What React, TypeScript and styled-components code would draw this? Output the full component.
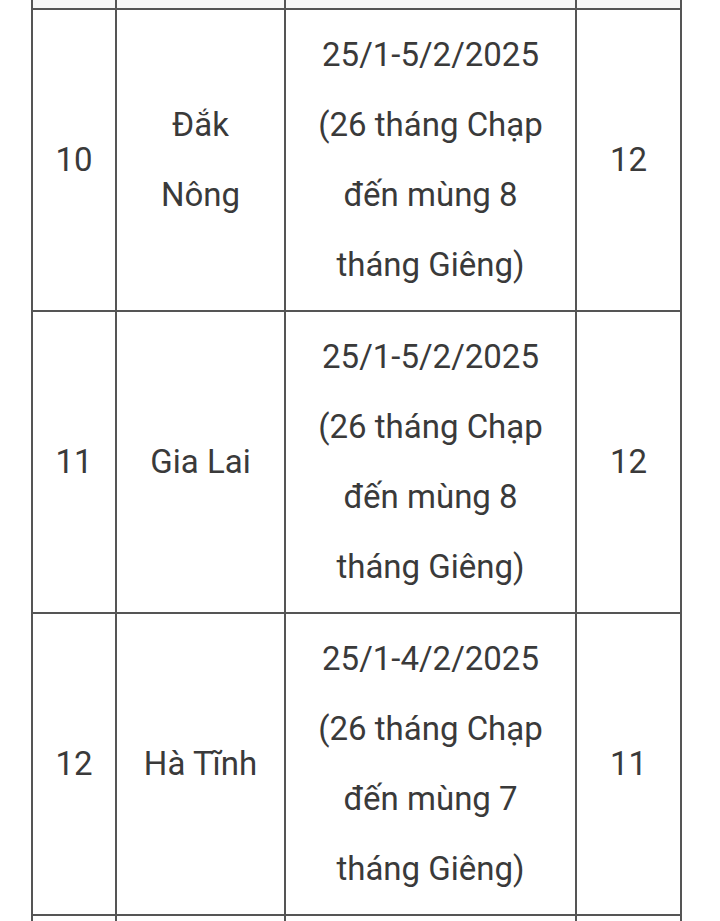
import styled, { createGlobalStyle } from "styled-components";

const GlobalStyle = createGlobalStyle`
    html, body {
        margin: 0;
        padding: 0;
        background: #ffffff;
    }
`;

const Page = styled.div`
    height: 921px;
    overflow: hidden;
    background: #ffffff;
`;

const Table = styled.table`
    margin-left: 31px;
    width: 649px;
    border-collapse: collapse;
    table-layout: fixed;
    font-family: Roboto, "Noto Sans", sans-serif;
    font-size: 33px;
    line-height: 70px;
    color: #3a3a3a;
`;

const Row = styled.tr<{ $stub?: boolean }>`
    height: ${({ $stub }) => ($stub ? "8px" : "302px")};
    background: ${({ $stub }) => ($stub ? "#f7f7f7" : "#ffffff")};
`;

const Cell = styled.td`
    border: 2px solid #555555;
    padding: 0 20px;
    text-align: center;
    vertical-align: middle;
`;

const StubCell = styled.td`
    border: 2px solid #555555;
    border-top: none;
    padding: 0;
    height: 8px;
`;

type Entry = {
    no: string;
    province: string;
    dates: string;
    note: string;
    days: string;
};

const entries: Entry[] = [
    {
        no: "10",
        province: "Đắk Nông",
        dates: "25/1-5/2/2025",
        note: "(26 tháng Chạp đến mùng 8 tháng Giêng)",
        days: "12",
    },
    {
        no: "11",
        province: "Gia Lai",
        dates: "25/1-5/2/2025",
        note: "(26 tháng Chạp đến mùng 8 tháng Giêng)",
        days: "12",
    },
    {
        no: "12",
        province: "Hà Tĩnh",
        dates: "25/1-4/2/2025",
        note: "(26 tháng Chạp đến mùng 7 tháng Giêng)",
        days: "11",
    },
];

export default function App() {
    return (
        <Page>
            <GlobalStyle />
            <Table>
                <colgroup>
                    <col style={{ width: 84 }} />
                    <col style={{ width: 169 }} />
                    <col style={{ width: 291 }} />
                    <col style={{ width: 105 }} />
                </colgroup>
                <tbody>
                    <Row $stub>
                        <StubCell />
                        <StubCell />
                        <StubCell />
                        <StubCell />
                    </Row>
                    {entries.map((e) => (
                        <Row key={e.no}>
                            <Cell>{e.no}</Cell>
                            <Cell>{e.province}</Cell>
                            <Cell>
                                {e.dates}
                                <br />
                                {e.note}
                            </Cell>
                            <Cell>{e.days}</Cell>
                        </Row>
                    ))}
                    <Row>
                        <Cell />
                        <Cell />
                        <Cell />
                        <Cell />
                    </Row>
                </tbody>
            </Table>
        </Page>
    );
}
